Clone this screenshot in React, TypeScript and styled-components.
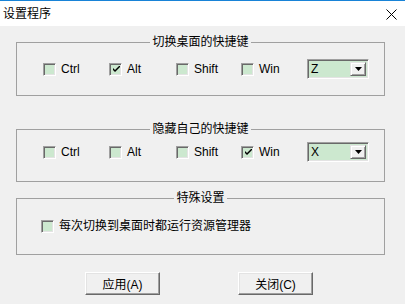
import React, { useState } from "react";
import { styled, createGlobalStyle } from "styled-components";

const GlobalStyle = createGlobalStyle`
  html, body {
    margin: 0;
    padding: 0;
    background: #f0f0f0;
  }
  body {
    font-family: "Liberation Sans", "Noto Sans CJK SC", sans-serif;
    font-size: 12px;
    color: #000;
  }
`;

const KEYS = ["Ctrl", "Alt", "Shift", "Win"];

function App() {
  const [desk, setDesk] = useState<Record<string, boolean>>({ Alt: true });
  const [hide, setHide] = useState<Record<string, boolean>>({ Win: true });
  const [explorer, setExplorer] = useState(false);

  return (
    <Window>
      <GlobalStyle />
      <TitleBar>
        <TitleText>设置程序</TitleText>
        <CloseButton aria-label="关闭">
          <svg width="11" height="11" viewBox="0 0 11 11">
            <path d="M0.5 0.5 L10.5 10.5 M10.5 0.5 L0.5 10.5" stroke="#000" strokeWidth="1" />
          </svg>
        </CloseButton>
      </TitleBar>

      <Body>
        <Group $top={9} $bottom={16}>
          <Legend>切换桌面的快捷键</Legend>
          <KeyRow>
            {KEYS.map((k) => (
              <Check
                key={k}
                label={k}
                checked={!!desk[k]}
                onToggle={() => setDesk({ ...desk, [k]: !desk[k] })}
              />
            ))}
            <Combo value="Z" />
          </KeyRow>
        </Group>

        <Group $top={5} $bottom={19} $gap={33}>
          <Legend>隐藏自己的快捷键</Legend>
          <KeyRow>
            {KEYS.map((k) => (
              <Check
                key={k}
                label={k}
                checked={!!hide[k]}
                onToggle={() => setHide({ ...hide, [k]: !hide[k] })}
              />
            ))}
            <Combo value="X" />
          </KeyRow>
        </Group>

        <Group $top={13} $bottom={21} $gap={16}>
          <Legend>特殊设置</Legend>
          <SingleRow>
            <Check
              label="每次切换到桌面时都运行资源管理器"
              checked={explorer}
              onToggle={() => setExplorer(!explorer)}
            />
          </SingleRow>
        </Group>

        <ButtonRow>
          <Button>应用(A)</Button>
          <Button>关闭(C)</Button>
        </ButtonRow>
      </Body>
    </Window>
  );
}

function Check({
  label,
  checked,
  onToggle,
}: {
  label: string;
  checked: boolean;
  onToggle: () => void;
}) {
  return (
    <CheckLabel onClick={onToggle}>
      <Box>
        {checked && (
          <svg width="7" height="7" viewBox="0 0 7 7">
            <path d="M0 2 L0 4 L2 6 L7 1 L7 -1 L2 4 Z" fill="#000" />
          </svg>
        )}
      </Box>
      <span>{label}</span>
    </CheckLabel>
  );
}

function Combo({ value }: { value: string }) {
  return (
    <ComboBox>
      <ComboText>{value}</ComboText>
      <DropButton>
        <svg width="7" height="4" viewBox="0 0 7 4">
          <path d="M0 0 H7 L3.5 4 Z" fill="#000" />
        </svg>
      </DropButton>
    </ComboBox>
  );
}

const Window = styled.div`
  width: 405px;
  height: 304px;
  background: #f0f0f0;
  display: flex;
  flex-direction: column;
  overflow: hidden;
`;

const TitleBar = styled.div`
  height: 25px;
  background: #fff;
  border-top: 1px solid #1883d7;
  display: flex;
  align-items: center;
  justify-content: space-between;
  padding: 0 8px 0 3px;
`;

const TitleText = styled.div`
  font-size: 12px;
  line-height: 14px;
`;

const CloseButton = styled.div`
  width: 11px;
  height: 11px;
  display: flex;
  margin-top: 1px;
`;

const Body = styled.div`
  display: flex;
  flex-direction: column;
  padding: 16px 20px 0 16px;
`;

const Group = styled.div<{ $top: number; $bottom: number; $gap?: number }>`
  border: 1px solid #a0a0a0;
  margin-top: ${(p) => p.$gap ?? 0}px;
  padding: 0 0 ${(p) => p.$bottom}px;
  display: flex;
  flex-direction: column;

  & > :nth-child(2) {
    margin-top: ${(p) => p.$top}px;
  }
`;

const Legend = styled.div`
  align-self: center;
  margin-top: -8px;
  padding: 0 2px;
  height: 15px;
  line-height: 15px;
  background: #f0f0f0;
  font-size: 12px;
`;

const KeyRow = styled.div`
  display: grid;
  grid-template-columns: 66px 67px 65px 66px auto;
  align-items: center;
  padding-left: 26px;
  height: 20px;
`;

const SingleRow = styled.div`
  display: flex;
  align-items: center;
  padding-left: 24px;
  height: 14px;
`;

const CheckLabel = styled.label`
  display: flex;
  align-items: center;
  gap: 5px;
  cursor: default;
  user-select: none;
  line-height: 14px;
`;

const Box = styled.span`
  box-sizing: border-box;
  width: 13px;
  height: 13px;
  background: #cce8cf;
  border-style: solid;
  border-width: 1px;
  border-color: #a0a0a0 #fff #fff #a0a0a0;
  box-shadow: inset 1px 1px 0 #696969, inset -1px -1px 0 #e3e3e3;
  display: flex;
  align-items: center;
  justify-content: center;
  padding: 1px 0 0 1px;
`;

const ComboBox = styled.div`
  box-sizing: border-box;
  width: 62px;
  height: 20px;
  background: #cce8cf;
  border-style: solid;
  border-width: 1px;
  border-color: #a0a0a0 #fff #fff #a0a0a0;
  box-shadow: inset 1px 1px 0 #696969, inset -1px -1px 0 #e3e3e3;
  display: flex;
  align-items: stretch;
  padding: 2px;
`;

const ComboText = styled.div`
  flex: 1;
  padding-left: 1px;
  line-height: 14px;
`;

const DropButton = styled.div`
  box-sizing: border-box;
  width: 16px;
  background: #f0f0f0;
  border-style: solid;
  border-width: 1px;
  border-color: #e3e3e3 #696969 #696969 #e3e3e3;
  box-shadow: inset 1px 1px 0 #fff, inset -1px -1px 0 #a0a0a0;
  display: flex;
  align-items: center;
  justify-content: center;
`;

const ButtonRow = styled.div`
  display: flex;
  gap: 78px;
  padding-left: 69px;
  margin-top: 17px;
`;

const Button = styled.div`
  box-sizing: border-box;
  width: 75px;
  height: 23px;
  background: #f0f0f0;
  border-style: solid;
  border-width: 1px;
  border-color: #fff #696969 #696969 #fff;
  box-shadow: inset -1px -1px 0 #a0a0a0, inset 1px 1px 0 #e3e3e3;
  display: flex;
  align-items: center;
  justify-content: center;
  font-size: 12px;
  user-select: none;
`;

export default App;
